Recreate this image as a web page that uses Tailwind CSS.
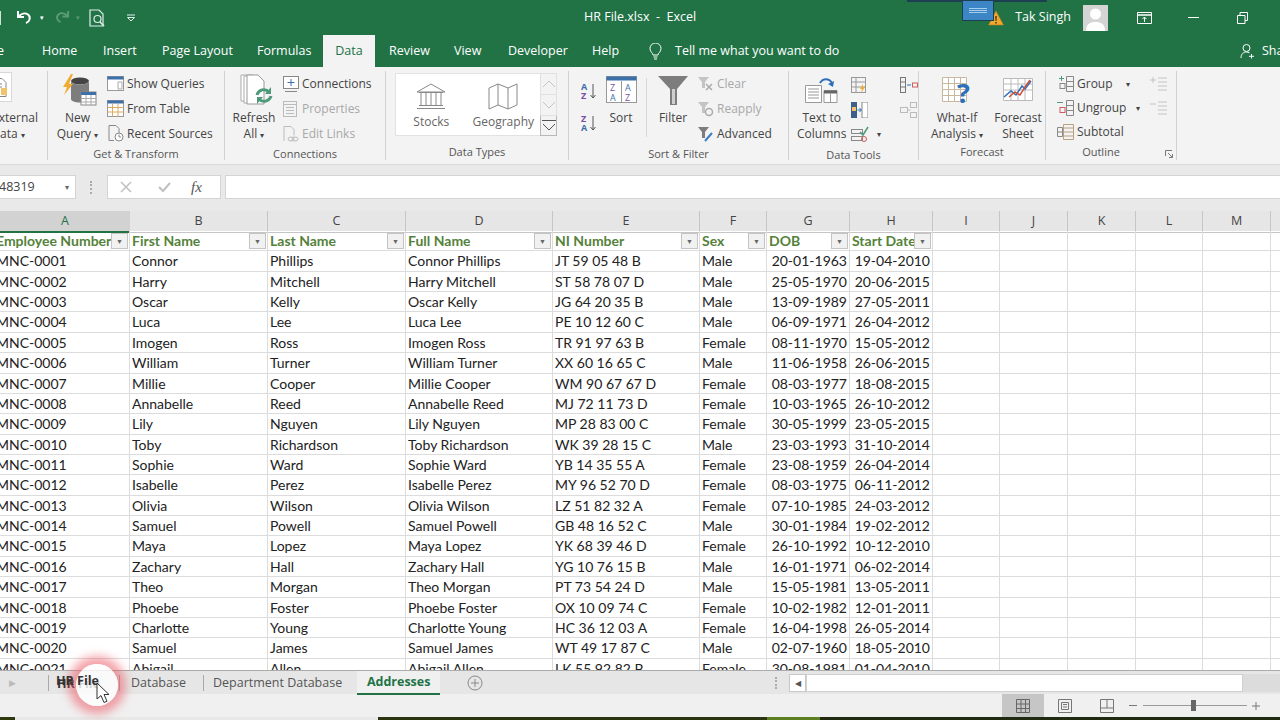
<!DOCTYPE html>
<html lang="en">
<head>
<meta charset="UTF-8">
<title>HR File.xlsx - Excel</title>
<script src="https://cdn.jsdelivr.net/npm/@tailwindcss/browser@4"></script>
</head>
<body class="w-[1280px] h-[720px] overflow-hidden bg-[#f0f0f0] relative font-['Open_Sans','Liberation_Sans',sans-serif]">

<!-- title bar -->
<div class="h-[35px] bg-[#217346] flex items-center text-white relative">
  <div class="w-[1px] h-[14px] bg-white/80"></div>
  <svg class="ml-[15px] w-[18px] h-[18px]" viewBox="0 0 18 18" fill="none" stroke="#fff" stroke-width="2"><path d="M2 2v6h6"/><path d="M2.5 7.500C5 4.500 9 3.500 12 5.500c3 2.500 2 7-2 8.500"/></svg>
  <span class="ml-[6px] text-[7px] leading-none">▾</span>
  <svg class="ml-[9px] w-[17px] h-[17px]" viewBox="0 0 18 18" fill="none" stroke="#5d9a78" stroke-width="2"><path d="M16 2v6h-6"/><path d="M15.500 7.500C13 4.500 9 3.500 6 5.500c-3 2.500-2 7 2 8.500"/></svg>
  <span class="ml-[6px] text-[7px] leading-none text-[#5d9a78]">▾</span>
  <svg class="ml-[9px] w-[17px] h-[18px]" viewBox="0 0 17 18" fill="none" stroke="#dfeee6" stroke-width="1.200"><path d="M1 1h9l4 4v12H1z"/><circle cx="8.500" cy="10" r="3.500"/><path d="M11 13l4 4" stroke-width="1.600"/></svg>
  <svg class="ml-[20px] w-[10px] h-[8px]" viewBox="0 0 10 8" fill="none" stroke="#dfeee6"><path d="M1 1h8"/><path d="M1.500 3.500L5 7l3.500-3.500z"/></svg>
  <span class="ml-[448px] text-[12.500px]">HR File.xlsx&nbsp; -&nbsp; Excel</span>
  <div class="ml-auto flex items-center">
    <svg class="w-[16px] h-[16px]" viewBox="0 0 16 16"><path d="M8 1l7.500 14H.5z" fill="#f0a92e" stroke="#b8791a" stroke-width=".6"/><path d="M7.300 6h1.400l-.2 5h-1zM7.300 12h1.400v1.500H7.300z" fill="#3b2a0a"/></svg>
    <span class="ml-[11px] text-[12.500px]">Tak Singh</span>
    <div class="ml-[12px] w-[25px] h-[26px] bg-[#d4d4d4] overflow-hidden">
      <svg viewBox="0 0 25 26" class="w-[25px] h-[26px]"><circle cx="12.500" cy="9" r="5.500" fill="#fff"/><path d="M3 26c0-7 4-9 9.500-9S22 19 22 26z" fill="#fff"/></svg>
    </div>
    <svg class="ml-[29px] w-[15px] h-[12px]" viewBox="0 0 15 12" fill="none" stroke="#fff"><path d="M.5.5h14v11H.5z"/><path d="M.5 3h14" stroke-width="1.500"/><path d="M7.500 10V5M5.500 7l2-2 2 2"/></svg>
    <div class="ml-[36px] w-[11px] h-[1px] bg-white"></div>
    <svg class="ml-[38px] w-[11px] h-[12px]" viewBox="0 0 11 12" fill="none" stroke="#fff"><path d="M.5 3.500h7.500v8H.5z"/><path d="M3 3.500V.5h7.500v8H8"/></svg>
    <div class="w-[32px]"></div>
  </div>
  <!-- stray window edge behind the title bar -->
  <div class="absolute left-[907px] top-0 w-[140px] h-[2px] bg-[#1d3f52]"></div>
  <div class="absolute left-[962px] top-0 w-[32px] h-[21px] bg-[#3d86c6] border border-[#1d3f52] flex flex-col items-center justify-center gap-[1px]">
    <div class="w-[18px] h-[1px] bg-[#a8cdea]"></div><div class="w-[18px] h-[1px] bg-[#a8cdea]"></div><div class="w-[18px] h-[1px] bg-[#a8cdea]"></div>
  </div>
</div>

<!-- ribbon tabs -->
<div class="h-[32px] bg-[#217346] flex items-stretch text-white text-[12.500px] leading-[32px] whitespace-nowrap">
  <span class="w-[42px] -ml-[3px] pl-0">e</span>
  <span class="ml-[3px] w-[61px]">Home</span>
  <span class="w-[59px]">Insert</span>
  <span class="w-[95px]">Page Layout</span>
  <span class="w-[66px]">Formulas</span>
  <span class="w-[52px] bg-[#f3f3f3] text-[#217346] text-center">Data</span>
  <span class="ml-[14px] w-[65px]">Review</span>
  <span class="w-[54px]">View</span>
  <span class="w-[84px]">Developer</span>
  <span class="w-[57px]">Help</span>
  <span class="w-[26px] flex items-center">
    <svg class="w-[13px] h-[17px]" viewBox="0 0 13 17" fill="none" stroke="#fff"><path d="M4 12c0-2-3-3-3-6.500a5.500 5.500 0 0 1 11 0C12 9 9 10 9 12z"/><path d="M4.500 14h4M5 16h3"/></svg>
  </span>
  <span>Tell me what you want to do</span>
  <span class="ml-auto flex items-center">
    <svg class="w-[15px] h-[16px]" viewBox="0 0 15 16" fill="none" stroke="#fff"><circle cx="6.500" cy="5" r="3.500"/><path d="M1 15c0-4 2.500-6 5.500-6 1 0 2 .2 3 .8"/><path d="M11.500 11v4.500M9 13.300h5"/></svg>
    <span class="ml-[7px] w-[18px] overflow-hidden">Share</span>
  </span>
</div>

<!-- ribbon -->
<div class="h-[98px] bg-[#f3f3f3] border-b border-[#d8d8d8] pt-[4px] flex items-start text-[12px] text-[#444] leading-4 whitespace-nowrap">

  <!-- get external data -->
  <section class="w-[48px] h-[89px] border-r border-[#d0d0d0] flex flex-col items-end pr-[9px]">
    <div class="h-[39px] w-[48px] pr-[-9px] relative">
      <div class="absolute left-0 top-[1px] w-[22px] h-[30px] bg-white border border-[#d8d8d8] border-l-0 flex items-center justify-center">
        <svg class="w-[15px] h-[19px]" viewBox="0 0 15 19" fill="none" stroke="#888"><path d="M1 .5h8l4 4v14H1z"/><path d="M3 6h6M3 9h6M3 12h4"/><rect x="8" y="10" width="6" height="7" fill="#f0c36d" stroke="none"/></svg>
      </div>
    </div>
    <span>External</span>
    <span class="self-start">ata <span class="text-[8px]">▾</span></span>
  </section>

  <!-- get & transform -->
  <section class="w-[177px] h-[89px] border-r border-[#d0d0d0] flex flex-col">
    <div class="h-[76px] flex">
      <div class="w-[59px] flex flex-col items-center">
        <div class="h-[39px] w-[59px] pl-[14px] flex items-center">
          <svg class="w-[35px] h-[35px]" viewBox="0 0 35 35"><ellipse cx="18" cy="8" rx="9" ry="3.500" fill="#444"/><path d="M9 8v18c0 2 4 3.500 9 3.500s9-1.500 9-3.500V8c0 2-4 3.500-9 3.500S9 10 9 8z" fill="#7d7d7d"/><path d="M9 1L1 14h4l-3 8 9-11H7l4-10z" fill="#f0ac30"/><rect x="19" y="19" width="15" height="13" fill="#fff" stroke="#888"/><rect x="19" y="19" width="15" height="3" fill="#3d6fa8"/><path d="M24 22v10M29 22v10M19 25.500h15M19 29h15" stroke="#aaa" fill="none"/></svg>
        </div>
        <span>New</span>
        <span>Query <span class="text-[8px]">▾</span></span>
      </div>
      <div class="flex flex-col">
        <div class="h-[25px] flex items-center">
          <svg class="w-[17px] h-[15px]" viewBox="0 0 17 15" fill="none"><rect x=".5" y=".5" width="16" height="14" fill="#fff" stroke="#999"/><rect x=".5" y=".5" width="16" height="3" fill="#3d6fa8"/><path d="M11 6h4v7h-4z" stroke="#aaa"/></svg>
          <span class="ml-[3px]">Show Queries</span>
        </div>
        <div class="h-[25px] flex items-center">
          <svg class="w-[17px] h-[17px]" viewBox="0 0 17 17" fill="none"><rect x=".5" y=".5" width="16" height="16" fill="#fff" stroke="#999"/><rect x=".5" y=".5" width="16" height="3" fill="#3d6fa8"/><path d="M5.500 3.500v13M11 3.500v13M.5 7.500h16M.5 12h16" stroke="#e0a860"/></svg>
          <span class="ml-[3px]">From Table</span>
        </div>
        <div class="h-[25px] flex items-center">
          <svg class="w-[17px] h-[17px]" viewBox="0 0 17 17" fill="none" stroke="#888"><path d="M2 .5h7l3 3V9M2 .5v15h5"/><circle cx="12" cy="12" r="4" fill="#fff"/><path d="M12 9.500V12h2"/></svg>
          <span class="ml-[3px]">Recent Sources</span>
        </div>
      </div>
    </div>
    <div class="h-[16px] shrink-0 text-center text-[11px] text-[#555]">Get &amp; Transform</div>
  </section>

  <!-- connections -->
  <section class="w-[161px] h-[89px] border-r border-[#d0d0d0] flex flex-col">
    <div class="h-[76px] flex">
      <div class="w-[58px] flex flex-col items-center">
        <div class="h-[39px] w-[58px] pl-[15px] flex items-center">
          <svg class="w-[34px] h-[33px]" viewBox="0 0 34 33" fill="none"><path d="M1 1h12v26H1z" fill="#fff" stroke="#aaa"/><path d="M4 2h12v27H4z" fill="#fff" stroke="#aaa"/><path d="M7 1h11l6 6v23H7z" fill="#fff" stroke="#999"/><path d="M17 21a7 7 0 0 1 12-3M31 22a7 7 0 0 1-12 3" stroke="#4c9a78" stroke-width="3"/><path d="M31 13v7h-6zM17 30v-7h6z" fill="#4c9a78"/></svg>
        </div>
        <span>Refresh</span>
        <span>All <span class="text-[8px]">▾</span></span>
      </div>
      <div class="flex flex-col">
        <div class="h-[25px] flex items-center">
          <svg class="w-[16px] h-[16px]" viewBox="0 0 16 16" fill="none" stroke="#888"><rect x=".5" y=".5" width="15" height="12" fill="#fff"/><path d="M8 3v7M4.500 6.500h7" stroke="#3d6fa8"/><path d="M2 15.500h12"/></svg>
          <span class="ml-[3px]">Connections</span>
        </div>
        <div class="h-[25px] flex items-center text-[#a8a8a8]">
          <svg class="w-[16px] h-[16px]" viewBox="0 0 16 16" fill="none" stroke="#bbb"><rect x=".5" y=".5" width="13" height="15"/><path d="M.5 3.500h13M3 6.500h8M3 9.500h8M3 12.500h8"/></svg>
          <span class="ml-[3px]">Properties</span>
        </div>
        <div class="h-[25px] flex items-center text-[#a8a8a8]">
          <svg class="w-[16px] h-[16px]" viewBox="0 0 16 16" fill="none" stroke="#bbb"><path d="M1 15V.5h7l3 3v6"/><ellipse cx="8" cy="13" rx="3" ry="2"/><ellipse cx="12" cy="13" rx="3" ry="2"/></svg>
          <span class="ml-[3px]">Edit Links</span>
        </div>
      </div>
    </div>
    <div class="h-[16px] shrink-0 text-center text-[11px] text-[#555]">Connections</div>
  </section>

  <!-- data types -->
  <section class="w-[183px] h-[89px] border-r border-[#d0d0d0] flex flex-col">
    <div class="h-[76px] pl-[9px] pt-[2px]">
      <div class="flex h-[63px]">
        <div class="w-[145px] bg-white border border-[#e2e2e2] border-r-0 flex text-[#666]">
          <div class="w-[71px] flex flex-col items-center pt-[9px]">
            <svg class="w-[30px] h-[27px]" viewBox="0 0 30 27" fill="none" stroke="#888"><path d="M1 9L15 1l14 8z"/><path d="M3 9.500h24M5 10v12M10 10v12M15 10v12M20 10v12M25 10v12M3 22.500h24M1 25.500h28"/></svg>
            <span class="mt-[4px]">Stocks</span>
          </div>
          <div class="w-[74px] flex flex-col items-center pt-[9px]">
            <svg class="w-[30px] h-[27px]" viewBox="0 0 30 27" fill="none" stroke="#888"><path d="M1 5l9-4 10 4 9-4v21l-9 4-10-4-9 4zM10 1v21M20 5v21"/></svg>
            <span class="mt-[4px]">Geography</span>
          </div>
        </div>
        <div class="w-[17px] flex flex-col">
          <div class="h-[22px] border border-[#e0e0e0] flex items-center justify-center"><svg class="w-[14px] h-[8px]" viewBox="0 0 14 8" fill="none" stroke="#c4c4c4"><path d="M1 7l6-6 6 6"/></svg></div>
          <div class="h-[21px] border border-t-0 border-[#e0e0e0] flex items-center justify-center"><svg class="w-[14px] h-[8px]" viewBox="0 0 14 8" fill="none" stroke="#c4c4c4"><path d="M1 1l6 6 6-6"/></svg></div>
          <div class="h-[20px] border border-t-0 border-[#b8b8b8] flex flex-col items-center justify-center gap-[2px]"><div class="w-[14px] h-[1px] bg-[#555]"></div><svg class="w-[14px] h-[8px]" viewBox="0 0 14 8" fill="none" stroke="#555"><path d="M1 1l6 6 6-6"/></svg></div>
        </div>
      </div>
    </div>
    <div class="h-[16px] shrink-0 text-center text-[11px] text-[#555]">Data Types</div>
  </section>

  <!-- sort & filter -->
  <section class="w-[220px] h-[89px] border-r border-[#d0d0d0] flex flex-col">
    <div class="h-[76px] flex">
      <div class="ml-[12px] w-[25px] flex flex-col gap-[14px] pt-[11px]">
        <svg class="w-[17px] h-[18px]" viewBox="0 0 17 18" fill="none"><text x="0" y="8" font-size="9" font-weight="700" fill="#3d6fa8">A</text><text x="0" y="17" font-size="9" font-weight="700" fill="#7a4fa8">Z</text><path d="M12 2v14M9.500 13l2.500 3 2.500-3" stroke="#555"/></svg>
        <svg class="w-[17px] h-[18px]" viewBox="0 0 17 18" fill="none"><text x="0" y="8" font-size="9" font-weight="700" fill="#7a4fa8">Z</text><text x="0" y="17" font-size="9" font-weight="700" fill="#3d6fa8">A</text><path d="M12 2v14M9.500 13l2.500 3 2.500-3" stroke="#555"/></svg>
      </div>
      <div class="w-[30px] flex flex-col items-center">
        <div class="h-[39px] flex items-center pb-[2px]">
          <svg class="w-[31px] h-[27px]" viewBox="0 0 31 27" fill="none"><rect x=".5" y=".5" width="30" height="26" fill="#fff" stroke="#999"/><rect x=".5" y=".5" width="30" height="4" fill="#3d6fa8"/><path d="M15.500 5v22" stroke="#999"/><text x="4" y="15" font-size="9" fill="#7a4fa8">Z</text><text x="4" y="25" font-size="9" fill="#3d6fa8">A</text><text x="19" y="15" font-size="9" fill="#3d6fa8">A</text><text x="19" y="25" font-size="9" fill="#7a4fa8">Z</text></svg>
        </div>
        <span>Sort</span>
      </div>
      <div class="ml-[10px] mt-[7px] w-[1px] h-[59px] bg-[#d8d8d8]"></div>
      <div class="ml-[11px] w-[30px] flex flex-col items-center">
        <div class="h-[39px] flex items-center">
          <svg class="w-[30px] h-[30px]" viewBox="0 0 30 30"><path d="M0 0h30L19 13v16h-7V13z" fill="#7d7d7d"/><path d="M14 13h3v15h-3z" fill="#cfcfcf"/></svg>
        </div>
        <span>Filter</span>
      </div>
      <div class="ml-[10px] flex flex-col">
        <div class="h-[25px] flex items-center text-[#a8a8a8]">
          <svg class="w-[16px] h-[16px]" viewBox="0 0 16 16"><path d="M0 1h11L7 6v6H4V6z" fill="#c4c4c4"/><path d="M8 8l6 6M14 8l-6 6" stroke="#aaa" stroke-width="1.500"/></svg>
          <span class="ml-[3px]">Clear</span>
        </div>
        <div class="h-[25px] flex items-center text-[#a8a8a8]">
          <svg class="w-[16px] h-[16px]" viewBox="0 0 16 16"><path d="M0 1h11L7 6v6H4V6z" fill="#c4c4c4"/><circle cx="11" cy="11" r="3.500" fill="none" stroke="#aaa" stroke-width="1.500"/></svg>
          <span class="ml-[3px]">Reapply</span>
        </div>
        <div class="h-[25px] flex items-center">
          <svg class="w-[16px] h-[16px]" viewBox="0 0 16 16"><path d="M0 1h11L7 6v6H4V6z" fill="#7d7d7d"/><path d="M7 15l7-8" stroke="#3d7fc4" stroke-width="2"/></svg>
          <span class="ml-[3px]">Advanced</span>
        </div>
      </div>
    </div>
    <div class="h-[16px] shrink-0 text-center text-[11px] text-[#555]">Sort &amp; Filter</div>
  </section>

  <!-- data tools -->
  <section class="w-[130px] h-[89px] border-r border-[#d0d0d0] flex flex-col">
    <div class="h-[76px] flex">
      <div class="ml-[8px] w-[52px] flex flex-col items-center">
        <div class="h-[39px] flex items-center">
          <svg class="w-[33px] h-[28px]" viewBox="0 0 33 28" fill="none"><path d="M.5 8.500h16v17H.5z" fill="#fff" stroke="#999"/><path d="M3 12h11M3 15h11M3 18h11M3 21h11" stroke="#999"/><path d="M19 13.500h13v12H19z" fill="#fff" stroke="#999"/><path d="M19 13.500h13v3H19z" fill="#666"/><path d="M25.500 16.500v9" stroke="#999"/><path d="M15 6c3-5 9-5 12 0" stroke="#2d6fb8" stroke-width="2"/><path d="M23 7l5 3 1-6z" fill="#2d6fb8"/></svg>
        </div>
        <span>Text to</span>
        <span>Columns</span>
      </div>
      <div class="ml-[5px] flex flex-col pt-[2px]">
        <div class="h-[24.500px] flex items-center"><svg class="w-[16px] h-[16px]" viewBox="0 0 16 16" fill="none" stroke="#999"><rect x=".5" y=".5" width="14" height="15"/><path d="M.5 5h14M.5 10h14M5 .5v15"/><path d="M12 7l-3 5h2l-1 4 4-6h-2z" fill="#f0ac30" stroke="none"/></svg></div>
        <div class="h-[24.500px] flex items-center"><svg class="w-[17px] h-[16px]" viewBox="0 0 17 16"><rect x="0" y="0" width="6" height="16" fill="#3d5f8a"/><rect x="1" y="5" width="4" height="4" fill="#f0c36d"/><rect x="11" y="0" width="6" height="16" fill="#fff" stroke="#888"/><path d="M6.500 8h3.500M8.500 6l2 2-2 2" stroke="#2d6fb8" fill="none"/></svg></div>
        <div class="h-[24.500px] flex items-center gap-[8px]"><svg class="w-[18px] h-[16px]" viewBox="0 0 18 16" fill="none" stroke="#888"><rect x=".5" y="3.500" width="11" height="4"/><rect x=".5" y="10.500" width="11" height="4"/><path d="M9 6l3 3 5-8" stroke="#4c9a78" stroke-width="1.500"/><circle cx="13" cy="13" r="2.500" stroke="#d05a5a"/></svg><span class="text-[8px]">▾</span></div>
      </div>
      <div class="ml-[19px] flex flex-col pt-[2px]">
        <div class="h-[24.500px] flex items-center"><svg class="w-[18px] h-[16px]" viewBox="0 0 18 16" fill="none"><rect x=".5" y=".5" width="5" height="15" stroke="#777"/><path d="M.5 5h5M.5 10h5" stroke="#777"/><path d="M7 8h4" stroke="#2d6fb8"/><rect x="12.500" y="6" width="5" height="4" stroke="#d05a5a"/></svg></div>
        <div class="h-[24.500px] flex items-center"><svg class="w-[17px] h-[16px]" viewBox="0 0 17 16" fill="none" stroke="#bbb"><rect x=".5" y="5.500" width="7" height="5"/><rect x="10.500" y=".5" width="6" height="5"/><rect x="10.500" y="10.500" width="6" height="5"/><path d="M7.500 8h3"/></svg></div>
      </div>
    </div>
    <div class="h-[16px] shrink-0 text-center text-[11px] text-[#555]">Data Tools</div>
  </section>

  <!-- forecast -->
  <section class="w-[127px] h-[89px] border-r border-[#d0d0d0] flex flex-col">
    <div class="h-[76px] flex">
      <div class="ml-[10px] w-[56px] flex flex-col items-center">
        <div class="h-[39px] flex items-center">
          <svg class="w-[31px] h-[28px]" viewBox="0 0 31 28"><path d="M.5.5h24v24H.5zM.5 6.500h24M.5 12.500h24M.5 18.500h24M6.500.5v24M12.500.5v24M18.500.5v24" fill="#fff" stroke="#c8b8a0"/><text x="15" y="26" font-size="27" font-weight="700" fill="#2d6fb8">?</text></svg>
        </div>
        <span>What-If</span>
        <span>Analysis <span class="text-[8px]">▾</span></span>
      </div>
      <div class="ml-[8px] w-[50px] flex flex-col items-center">
        <div class="h-[39px] flex items-center">
          <svg class="w-[30px] h-[26px]" viewBox="0 0 30 26" fill="none"><path d="M.5.5h29v22H.5zM.5 6h29M.5 12h29M8 .5v22M15 .5v22M22 .5v22" fill="#fff" stroke="#bbb"/><path d="M1 19l7-6 5 4 6-9 3 3 6-8" stroke="#2d6fb8" stroke-width="1.500"/><path d="M6 19l6-5 5 3 5-8 5-7" stroke="#d0503c" stroke-width="1.500"/></svg>
        </div>
        <span>Forecast</span>
        <span>Sheet</span>
      </div>
    </div>
    <div class="h-[16px] shrink-0 text-center text-[11px] text-[#555]">Forecast</div>
  </section>

  <!-- outline -->
  <section class="w-[131px] h-[89px] flex flex-col relative border-r border-[#d0d0d0]">
    <div class="h-[76px] flex pl-[11px]">
      <div class="w-[93px] flex flex-col pt-[1px]">
        <div class="h-[24px] flex items-center">
          <svg class="w-[17px] h-[16px]" viewBox="0 0 17 16" fill="none" stroke="#888"><path d="M2 2.500h5M4.500 0v5" stroke="#4c9a78"/><rect x="3" y="7.500" width="5" height="5"/><path d="M9.500.5h7v15h-7zM9.500 5.500h7M9.500 10.500h7"/></svg>
          <span class="ml-[3px]">Group</span><span class="ml-[13px] text-[8px]">▾</span>
        </div>
        <div class="h-[24px] flex items-center">
          <svg class="w-[17px] h-[16px]" viewBox="0 0 17 16" fill="none" stroke="#888"><path d="M0 2.500h6" stroke="#4c9a78"/><rect x="3" y="7.500" width="5" height="5" stroke="#d05a5a"/><path d="M9.500.5h7v15h-7zM9.500 5.500h7M9.500 10.500h7"/></svg>
          <span class="ml-[3px]">Ungroup</span><span class="ml-[10px] text-[8px]">▾</span>
        </div>
        <div class="h-[24px] flex items-center">
          <svg class="w-[17px] h-[16px]" viewBox="0 0 17 16" fill="none" stroke="#888"><path d="M.5 3.500h5v9h-5zM.5 8h5"/><path d="M6.500.5h10v15h-10zM6.500 4h10M6.500 8h10M6.500 12h10" stroke="#b8a080"/></svg>
          <span class="ml-[3px]">Subtotal</span>
        </div>
      </div>
      <div class="flex flex-col pt-[1px]">
        <div class="h-[24px] flex items-center"><svg class="w-[17px] h-[14px]" viewBox="0 0 17 14" fill="none" stroke="#c4c4c4"><path d="M0 3h6M3 0v6M8 1h9M8 5h9M8 9h9M8 13h9"/></svg></div>
        <div class="h-[24px] flex items-center"><svg class="w-[17px] h-[14px]" viewBox="0 0 17 14" fill="none" stroke="#c4c4c4"><path d="M0 3h6M8 1h9M8 5h9M8 9h9M8 13h9"/></svg></div>
      </div>
    </div>
    <div class="h-[16px] shrink-0 text-center text-[11px] text-[#555] pr-[20px]">Outline</div>
    <svg class="absolute left-[119px] top-[79px] w-[8px] h-[8px]" viewBox="0 0 8 8" fill="none" stroke="#777"><path d="M.5 6V.5H7M3 3l4 4M4 7.500h3.500V4"/></svg>
  </section>
</div>

<!-- formula bar -->
<div class="h-[46px] bg-[#e9e9e9] flex items-center pb-[2px] text-[#444]">
  <div class="w-[76px] h-[24px] bg-white border border-[#d4d4d4] border-l-0 flex items-center justify-between pr-[6px] text-[12.500px]">
    <span class="-ml-[1px]">48319</span><span class="text-[8px] text-[#666]">▾</span>
  </div>
  <div class="ml-[14px] w-[2px] h-[13px] border-l-2 border-dotted border-[#aaa]"></div>
  <div class="ml-[15px] w-[114px] h-[24px] bg-white border border-[#d4d4d4] flex items-center pl-[12px]">
    <svg class="w-[12px] h-[12px]" viewBox="0 0 12 12" fill="none" stroke="#c0c0c0" stroke-width="1.500"><path d="M1 1l10 10M11 1L1 11"/></svg>
    <svg class="ml-[26px] w-[13px] h-[12px]" viewBox="0 0 13 12" fill="none" stroke="#c0c0c0" stroke-width="2"><path d="M1 6l4 4 7-8"/></svg>
    <span class="ml-[20px] font-['Liberation_Serif',serif] italic text-[15px] text-[#555]">fx</span>
  </div>
  <div class="ml-[4px] flex-1 h-[24px] bg-white border border-[#d4d4d4] border-r-0"></div>
</div>

<!-- worksheet -->
<div id="sheet" class="h-[459px] overflow-hidden bg-white font-['Lato','Liberation_Sans',sans-serif] text-[14px] text-[#222] whitespace-nowrap">
  <div class="h-[20px] bg-[#e6e6e6] text-[#444] grid grid-cols-[130px_138px_138px_147px_147px_67px_83px_83px_67px_68px_68px_67px_68px_9px] text-center leading-[20px] font-['Open_Sans',sans-serif] text-[12.500px]">
    <div class="bg-[#d2d2d2] border-b-2 border-[#217346] text-[#217346]">A</div>
    <div class="border-r border-b border-[#c6c6c6]">B</div>
    <div class="border-r border-b border-[#c6c6c6]">C</div>
    <div class="border-r border-b border-[#c6c6c6]">D</div>
    <div class="border-r border-b border-[#c6c6c6]">E</div>
    <div class="border-r border-b border-[#c6c6c6]">F</div>
    <div class="border-r border-b border-[#c6c6c6]">G</div>
    <div class="border-r border-b border-[#c6c6c6]">H</div>
    <div class="border-r border-b border-[#c6c6c6]">I</div>
    <div class="border-r border-b border-[#c6c6c6]">J</div>
    <div class="border-r border-b border-[#c6c6c6]">K</div>
    <div class="border-r border-b border-[#c6c6c6]">L</div>
    <div class="border-r border-b border-[#c6c6c6]">M</div>
    <div class="border-b border-[#c6c6c6]"></div>
  </div>
  <div id="rows"></div>
</div>

<!-- sheet tabs -->
<div class="h-[24px] bg-[#e6e6e6] border-t border-[#ababab] flex items-center text-[12.500px] text-[#555] whitespace-nowrap">
  <span class="ml-[9px] w-[39px] text-[9px] text-[#bbb]">▶</span>
  <div class="h-[16px] border-l border-[#aaa] pl-[8px] pr-[8px] font-bold text-[#333]">HR File</div>
  <div class="ml-[11px] h-[16px] border-l border-[#aaa] pl-[11px] pr-[9px] leading-4">Database</div>
  <div class="h-[16px] border-l border-[#aaa] ml-[8px] pl-[9px] pr-[15px] leading-4">Department Database</div>
  <div class="h-[24px] -mb-[1px] ml-0 w-[83px] bg-[#f0f0f0] border-b-2 border-[#217346] text-center font-bold text-[#217346] leading-[21px]">Addresses</div>
  <svg class="ml-[27px] w-[16px] h-[16px]" viewBox="0 0 16 16" fill="none" stroke="#888"><circle cx="8" cy="8" r="7"/><path d="M8 4v8M4 8h8"/></svg>
  <div class="ml-[292px] w-[2px] h-[12px] border-l-2 border-dotted border-[#aaa]"></div>
  <div class="ml-[12px] w-[17px] h-[18px] bg-white border border-[#c8c8c8] flex items-center justify-center text-[8px] text-[#555]">◀</div>
  <div class="w-[437px] h-[18px] bg-white border border-[#d0d0d0]"></div>
  <div class="flex-1 h-[18px] bg-[#dcdcdc]"></div>
</div>

<!-- status bar -->
<div class="h-[23px] bg-[#f0f0f0] flex items-stretch">
  <div class="ml-[1002px] w-[42px] bg-[#c6c6c6] flex items-center justify-center">
    <svg class="w-[14px] h-[14px]" viewBox="0 0 14 14" fill="none" stroke="#666"><path d="M.5.5h13v13H.5zM.5 5h13M.5 9.500h13M5 .5v13M9.500.5v13"/></svg>
  </div>
  <div class="w-[42px] flex items-center justify-center">
    <svg class="w-[14px] h-[14px]" viewBox="0 0 14 14" fill="none" stroke="#777"><path d="M.5.5h13v13H.5z"/><path d="M3.500 3.500h7v7h-7zM5 5.500h4M5 8h4"/></svg>
  </div>
  <div class="w-[42px] flex items-center justify-center">
    <svg class="w-[14px] h-[14px]" viewBox="0 0 14 14" fill="none" stroke="#777"><path d="M.5.5h13v13H.5zM.5 9h13M7 .5V9"/></svg>
  </div>
  <div class="ml-[1px] flex items-center">
    <div class="w-[8px] h-[1px] bg-[#777]"></div>
    <div class="relative ml-[6px] w-[104px] h-[1px] bg-[#999]">
      <div class="absolute left-[48px] -top-[5px] w-[5px] h-[11px] bg-[#666]"></div>
    </div>
    <svg class="ml-[5px] w-[8px] h-[8px]" viewBox="0 0 8 8" fill="none" stroke="#777"><path d="M4 0v8M0 4h8"/></svg>
  </div>
</div>

<!-- desktop strip under the window -->
<div class="h-[3px] flex">
  <div class="w-[15px] bg-[#2d3a10]"></div>
  <div class="w-[363px] bg-[#e8e8e8]"></div>
  <div class="w-[389px] bg-[#2a3410]"></div>
  <div class="w-[53px] bg-[#5c7f20]"></div>
  <div class="flex-1 bg-[#1f2a10]"></div>
</div>

<!-- click highlight and pointer -->
<div class="absolute left-[76px] top-[664px] w-[42px] h-[42px] rounded-full bg-white/80 shadow-[0_0_10px_8px_rgba(235,90,100,0.55)]"></div>
<div class="absolute left-[56px] top-[670px] h-[22px] leading-[22px] text-[12.500px] font-bold text-[#333]">HR File</div>
<svg class="absolute left-[96px] top-[682px] w-[15px] h-[22px]" viewBox="0 0 15 22"><path d="M1 1v16l4-3.500 3 7 3-1.300-3-6.700h5z" fill="#fff" stroke="#333"/></svg>

<script>
  // Employee rows
  const people = [
    ['MNC-0001','Connor','Phillips','Connor Phillips','JT 59 05 48 B','Male','20-01-1963','19-04-2010'],
    ['MNC-0002','Harry','Mitchell','Harry Mitchell','ST 58 78 07 D','Male','25-05-1970','20-06-2015'],
    ['MNC-0003','Oscar','Kelly','Oscar Kelly','JG 64 20 35 B','Male','13-09-1989','27-05-2011'],
    ['MNC-0004','Luca','Lee','Luca Lee','PE 10 12 60 C','Male','06-09-1971','26-04-2012'],
    ['MNC-0005','Imogen','Ross','Imogen Ross','TR 91 97 63 B','Female','08-11-1970','15-05-2012'],
    ['MNC-0006','William','Turner','William Turner','XX 60 16 65 C','Male','11-06-1958','26-06-2015'],
    ['MNC-0007','Millie','Cooper','Millie Cooper','WM 90 67 67 D','Female','08-03-1977','18-08-2015'],
    ['MNC-0008','Annabelle','Reed','Annabelle Reed','MJ 72 11 73 D','Female','10-03-1965','26-10-2012'],
    ['MNC-0009','Lily','Nguyen','Lily Nguyen','MP 28 83 00 C','Female','30-05-1999','23-05-2015'],
    ['MNC-0010','Toby','Richardson','Toby Richardson','WK 39 28 15 C','Male','23-03-1993','31-10-2014'],
    ['MNC-0011','Sophie','Ward','Sophie Ward','YB 14 35 55 A','Female','23-08-1959','26-04-2014'],
    ['MNC-0012','Isabelle','Perez','Isabelle Perez','MY 96 52 70 D','Female','08-03-1975','06-11-2012'],
    ['MNC-0013','Olivia','Wilson','Olivia Wilson','LZ 51 82 32 A','Female','07-10-1985','24-03-2012'],
    ['MNC-0014','Samuel','Powell','Samuel Powell','GB 48 16 52 C','Male','30-01-1984','19-02-2012'],
    ['MNC-0015','Maya','Lopez','Maya Lopez','YK 68 39 46 D','Female','26-10-1992','10-12-2010'],
    ['MNC-0016','Zachary','Hall','Zachary Hall','YG 10 76 15 B','Male','16-01-1971','06-02-2014'],
    ['MNC-0017','Theo','Morgan','Theo Morgan','PT 73 54 24 D','Male','15-05-1981','13-05-2011'],
    ['MNC-0018','Phoebe','Foster','Phoebe Foster','OX 10 09 74 C','Female','10-02-1982','12-01-2011'],
    ['MNC-0019','Charlotte','Young','Charlotte Young','HC 36 12 03 A','Female','16-04-1998','26-05-2014'],
    ['MNC-0020','Samuel','James','Samuel James','WT 49 17 87 C','Male','02-07-1960','18-05-2010'],
    ['MNC-0021','Abigail','Allen','Abigail Allen','LK 55 92 82 B','Female','30-08-1981','01-04-2010']
  ];
  const heads = ['Employee Number','First Name','Last Name','Full Name','NI Number','Sex','DOB','Start Date'];
  const rowClass = 'grid grid-cols-[130px_138px_138px_147px_147px_67px_83px_83px_67px_68px_68px_67px_68px_9px] border-b border-[#dcdcdc]';
  const cell = 'border-r border-[#dcdcdc] overflow-hidden pl-[2px] pr-[2px]';
  const blanks = '<div class="border-r border-[#dcdcdc]"></div>'.repeat(5) + '<div></div>';
  const arrow = '<div class="absolute right-[1px] top-[2px] w-[17px] h-[16px] bg-[#f1f1f1] border border-[#c4c4c4] flex items-center justify-center text-[7px] text-[#666]">▼</div>';

  let html = '<div class="' + rowClass + ' h-[20.400px] leading-[20px] font-bold text-[#54823a]">';
  heads.forEach((h, i) => {
    html += '<div class="relative ' + cell + '"><div class="' + (i === 0 ? '-ml-[6px]' : '') + '">' + h + '</div>' + arrow + '</div>';
  });
  html += blanks + '</div>';

  people.forEach(p => {
    html += '<div class="' + rowClass + ' h-[20.370px] leading-[20px]">';
    p.forEach((v, i) => {
      const inner = i === 0 ? '-ml-[6px]' : (i > 5 ? 'text-right' : '');
      html += '<div class="' + cell + '"><div class="' + inner + '">' + v + '</div></div>';
    });
    html += blanks + '</div>';
  });
  document.getElementById('rows').innerHTML = html;
</script>
</body>
</html>
